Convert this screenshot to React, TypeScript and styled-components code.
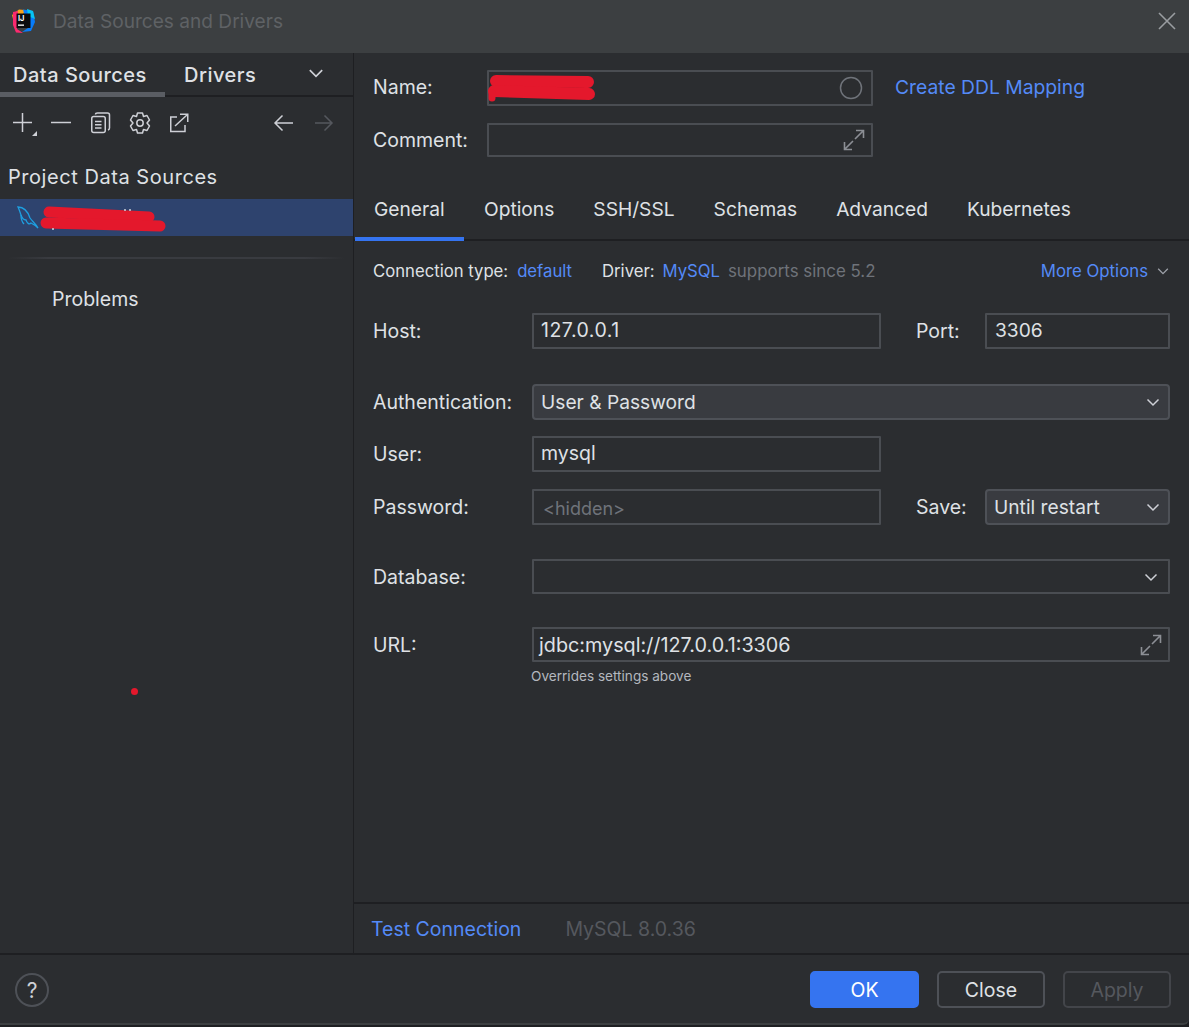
import * as React from 'react';
import styled, { createGlobalStyle } from 'styled-components';

// =========================
// Tokens
// =========================

const text = '#dfe1e5';
const link = '#548af7';
const muted = '#6f737a';
const border = '#4a4d52';
const bg = '#2b2d30';
const line = '#1e1f22';

const GlobalStyle = createGlobalStyle`
  html, body {
    margin: 0;
    padding: 0;
    background: ${line};
  }
  body {
    font-family: Inter, "Noto Sans", sans-serif;
    color: ${text};
    overflow: hidden;
  }
`;

// =========================
// Window shell
// =========================

const Window = styled.div`
  position: relative;
  width: 1189px;
  height: 1027px;
  display: flex;
  flex-direction: column;
  background: ${line};
  overflow: hidden;
`;

const TitleBar = styled.div`
  height: 53px;
  flex: none;
  display: flex;
  align-items: center;
  padding: 0 10px 11px 10px;
  box-sizing: border-box;
  background: #3c3f41;
`;

const Title = styled.div`
  margin-left: 17px;
  font-size: 19.100px;
  color: #5f6265;
  flex: 1;
`;

const Main = styled.div`
  height: 900px;
  flex: none;
  display: flex;
  background: ${bg};
`;

// =========================
// Left panel
// =========================

const Side = styled.aside`
  width: 353px;
  flex: none;
  border-right: 1px solid ${line};
  display: flex;
  flex-direction: column;
`;

const SideTabs = styled.div`
  height: 44px;
  flex: none;
  display: flex;
  align-items: stretch;
  border-bottom: 2px solid ${line};
  box-sizing: border-box;
`;

const SideTab = styled.div<{ $active?: boolean }>`
  width: ${({ $active }) => ($active ? '165px' : '134px')};
  box-sizing: border-box;
  margin-bottom: ${({ $active }) => ($active ? '-2px' : '0')};
  padding: 10px 0 0 ${({ $active }) => ($active ? '13px' : '19px')};
  font-size: 20px;
  font-weight: 500;
  letter-spacing: 0.5px;
  border-bottom: ${({ $active }) => ($active ? '5px solid #5a5d63' : 'none')};
`;

const TabsChevron = styled.div`
  display: flex;
  align-items: center;
  padding: 0 0 2px 8px;
`;

const Toolbar = styled.div`
  height: 52px;
  flex: none;
  display: flex;
  align-items: center;
  padding: 0 16px 0 12px;
  box-sizing: border-box;
`;

const ToolIcon = styled.svg<{ $gap?: number; $disabled?: boolean }>`
  width: 24px;
  height: 24px;
  flex: none;
  overflow: visible;
  margin-left: ${({ $gap }) => $gap ?? 0}px;
  fill: none;
  stroke: ${({ $disabled }) => ($disabled ? '#55585e' : '#ced0d6')};
  stroke-width: 1.5;
`;

const ToolSpacer = styled.div`
  flex: 1;
`;

const GroupTitle = styled.div`
  height: 50px;
  flex: none;
  padding: 6px 0 0 8px;
  display: flex;
  align-items: center;
  font-size: 20px;
  letter-spacing: 0.55px;
  box-sizing: border-box;
`;

const Selected = styled.div`
  position: relative;
  height: 37px;
  flex: none;
  background: #2e436e;
  padding-left: 16px;
  display: flex;
  align-items: center;
`;

const Scribble = styled.svg`
  position: absolute;
  left: 0;
  top: 0;
  overflow: visible;
  fill: none;
  stroke: #e4182c;
  stroke-linecap: round;
  pointer-events: none;
`;

const Separator = styled.div`
  height: 2px;
  flex: none;
  margin: 21px 8px 0;
  background: linear-gradient(90deg, #2b2d30, #393b40 12%, #393b40 88%, #2b2d30);
`;

const ProblemsRow = styled.div`
  padding: 28px 0 0 52px;
  font-size: 19.500px;
  line-height: 24px;
`;

const RedDot = styled.div`
  position: absolute;
  left: 131px;
  top: 688px;
  width: 7px;
  height: 7px;
  border-radius: 50%;
  background: #e4182c;
`;

// =========================
// Right panel
// =========================

const Content = styled.section`
  flex: 1;
  min-width: 0;
  display: flex;
  flex-direction: column;
`;

const Header = styled.div`
  padding: 17px 19px 0;
  height: 131px;
  box-sizing: border-box;
  flex: none;
`;

const Row = styled.div<{ $top?: number }>`
  display: flex;
  align-items: center;
  margin-top: ${({ $top }) => $top ?? 0}px;
`;

const Label = styled.div<{ $width: number }>`
  width: ${({ $width }) => $width}px;
  flex: none;
  font-size: 19.500px;
`;

const Field = styled.div<{ $width?: number; $height?: number; $filled?: boolean; $pad?: number; $end?: number; $round?: boolean }>`
  position: relative;
  ${({ $width }) => ($width ? `width: ${$width}px; flex: none;` : 'flex: 1; min-width: 0;')}
  height: ${({ $height }) => $height ?? 36}px;
  box-sizing: border-box;
  border: 2px solid ${({ $filled }) => ($filled ? '#4e5157' : border)};
  border-radius: ${({ $round }) => ($round ? '4px' : '1px')};
  background: ${({ $filled }) => ($filled ? '#393b40' : 'transparent')};
  display: flex;
  align-items: center;
  justify-content: space-between;
  padding: 0 ${({ $end }) => $end ?? 8}px 0 ${({ $pad }) => $pad ?? 7}px;
  font-size: 19.200px;
`;

const FieldValue = styled.span<{ $hint?: boolean; $tracking?: number; $size?: number }>`
  color: ${({ $hint }) => ($hint ? muted : text)};
  font-size: ${({ $hint, $size }) => ($hint ? '18px' : `${$size ?? 19.5}px`)};
  letter-spacing: ${({ $tracking }) => $tracking ?? 0}px;
  position: relative;
  top: ${({ $hint }) => ($hint ? '1px' : '-1px')};
  left: ${({ $hint }) => ($hint ? '2px' : '0')};
`;

const LinkText = styled.span<{ $size?: number; $left?: number }>`
  color: ${link};
  font-size: ${({ $size }) => $size ?? 19.3}px;
  margin-left: ${({ $left }) => $left ?? 0}px;
  white-space: nowrap;
`;

const Tabs = styled.div`
  height: 57px;
  flex: none;
  box-sizing: border-box;
  display: flex;
  border-bottom: 2px solid ${line};
`;

const Tab = styled.div<{ $active?: boolean }>`
  box-sizing: border-box;
  height: 57px;
  width: ${({ $active }) => ($active ? '109px' : 'auto')};
  padding: 0 20px ${({ $active }) => ($active ? '4px' : '8px')} ${({ $active }) => ($active ? '19px' : '20px')};
  display: flex;
  align-items: center;
  font-size: 19.200px;
  margin: 0 ${({ $active }) => ($active ? '0' : '-1px')} 0 ${({ $active }) => ($active ? '1px' : '0')};
  border-bottom: ${({ $active }) => ($active ? '4px solid #3574f0' : 'none')};
`;

const Form = styled.div`
  flex: 1;
  padding: 0 19px;
  min-height: 0;
`;

const InfoRow = styled.div`
  height: 29px;
  margin-top: 15px;
  display: flex;
  align-items: center;
  font-size: 16.700px;
  white-space: nowrap;
`;

const InfoGap = styled.span<{ $width: number }>`
  display: inline-block;
  width: ${({ $width }) => $width}px;
`;

const Muted = styled.span`
  font-size: 16.900px;
  color: ${muted};
`;

const MoreOptions = styled.div`
  margin-left: auto;
  display: flex;
  align-items: center;
  gap: 8px;
  font-size: 16.800px;
  color: ${link};
`;

const SideLabel = styled.div`
  width: 69px;
  margin-left: 35px;
  flex: none;
  font-size: 19.500px;
`;

const Hint = styled.div`
  margin: 6px 0 0 158px;
  font-size: 13.600px;
  color: #b4b8bf;
`;

const StatusBar = styled.div`
  height: 51px;
  flex: none;
  box-sizing: border-box;
  border-top: 2px solid ${line};
  display: flex;
  align-items: center;
  padding: 0 0 0 17px;
  gap: 44px;
`;

const Version = styled.span`
  font-size: 19.500px;
  color: #55585e;
`;

// =========================
// Footer
// =========================

const Footer = styled.footer`
  height: 72px;
  flex: none;
  box-sizing: border-box;
  background: ${bg};
  border-top: 2px solid ${line};
  border-bottom: 2px solid #3c3f41;
  border-bottom-right-radius: 6px;
  padding: 16px 18px 0 15px;
  display: flex;
  align-items: flex-start;
`;

const Help = styled.div`
  width: 34px;
  height: 34px;
  box-sizing: border-box;
  border: 2px solid #4e5157;
  border-radius: 50%;
  margin-top: 2px;
  display: flex;
  align-items: center;
  justify-content: center;
  font-size: 21px;
  color: #ced0d6;
`;

const Buttons = styled.div`
  margin-left: auto;
  display: flex;
  gap: 18px;
`;

const Button = styled.div<{ $kind?: 'primary' | 'disabled' }>`
  width: ${({ $kind }) => ($kind === 'primary' ? '109px' : '108px')};
  height: 37px;
  box-sizing: border-box;
  border-radius: 5px;
  display: flex;
  align-items: center;
  justify-content: center;
  font-size: 19.500px;
  border: 2px solid ${({ $kind }) => ($kind === 'primary' ? '#3574f0' : $kind === 'disabled' ? '#43454a' : '#4e5157')};
  background: ${({ $kind }) => ($kind === 'primary' ? '#3574f0' : 'transparent')};
  color: ${({ $kind }) => ($kind === 'primary' ? '#ffffff' : $kind === 'disabled' ? '#55585e' : text)};
`;

// =========================
// Icons
// =========================

const AppLogo = () => (
  <svg width="26" height="26" viewBox="0 0 26 26" style={{ flex: 'none' }}>
    <path d="M2 7 L9 1.500 L15 2 L10 14 L4 15 Z" fill="#f9a11b" />
    <path d="M3 4 L8 3 L7 21 L13 25 L6 24.500 L3 17 Z" fill="#fc2a6f" />
    <path d="M13 1.500 L23 3 L25 14 L21 23 L12 24 L18 20 Z" fill="#087cfa" />
    <path d="M17 1 L23 3 L25 11 L18 8 Z" fill="#07c3f2" />
    <rect x="6.500" y="5.500" width="14" height="14.500" fill="#0b0b0d" />
    <text x="8" y="12.500" fontFamily="Inter, sans-serif" fontWeight="700" fontSize="7.500" fill="#ffffff">IJ</text>
    <rect x="8" y="16.500" width="6" height="1.300" fill="#ffffff" />
  </svg>
);

const Chevron = ({ size = 16, color = '#ced0d6' }: { size?: number; color?: string }) => (
  <svg width={size} height={size} viewBox="0 0 16 16" fill="none" stroke={color} strokeWidth="1.5">
    <path d="M2.500 5.500 L8 11 L13.500 5.500" />
  </svg>
);

const Expand = () => (
  <svg width="24" height="24" viewBox="0 0 24 24" fill="none" stroke="#8c8f95" strokeWidth="1.600" style={{ flex: 'none', marginRight: -3 }}>
    <path d="M14 2.500h7.500V10M21.500 2.500 L13 11M11 13 L2.500 21.500M2.500 14v7.500H10" />
  </svg>
);

// =========================
// Component
// =========================

export default function App() {
  return (
    <Window>
      <GlobalStyle />
      <TitleBar>
        <AppLogo />
        <Title>Data Sources and Drivers</Title>
        <svg width="18" height="18" viewBox="0 0 18 18" stroke="#9a9da1" strokeWidth="1.600" style={{ marginRight: 3 }}>
          <path d="M1 1 L17 17 M17 1 L1 17" />
        </svg>
      </TitleBar>
      <Main>
        <Side>
          <SideTabs>
            <SideTab $active>Data Sources</SideTab>
            <SideTab>Drivers</SideTab>
            <TabsChevron>
              <Chevron size={18} />
            </TabsChevron>
          </SideTabs>
          <Toolbar>
            <ToolIcon viewBox="0 0 24 24">
              <path d="M10.500 2v19M1 11.500h19" />
              <path d="M25 20v5h-5z" fill="#ced0d6" stroke="none" />
            </ToolIcon>
            <ToolIcon viewBox="0 0 24 24" $gap={12}>
              <path d="M3 11.500h20" />
            </ToolIcon>
            <ToolIcon viewBox="0 0 24 24" $gap={15}>
              <rect x="4.750" y="5.500" width="13.500" height="16" rx="2" />
              <path d="M8.500 3.500 C8.500 2.500 9.500 2 10.500 2h10c1.200 0 2 .8 2 2v13c0 1-.6 1.700-1.500 2" />
              <path d="M8 10.500h6.500M8 13.750h6.500M8 17h6.500" />
            </ToolIcon>
            <ToolIcon viewBox="0 0 24 24" $gap={17}>
              <path d="M9.500 2h5l1 3.500 3.500-1 2.500 4.500-2.500 3 2.500 3-2.500 4.500-3.500-1-1 3.500h-5l-1-3.500-3.500 1-2.500-4.500 2.500-3-2.500-3 2.500-4.500 3.500 1z" strokeLinejoin="round" />
              <circle cx="12" cy="12" r="3.200" />
            </ToolIcon>
            <ToolIcon viewBox="0 0 24 24" $gap={15}>
              <path d="M10 6H3.750v14.500H18V14" />
              <path d="M8 15 L20.500 3.500M13 3.250h7.750V11" />
            </ToolIcon>
            <ToolSpacer />
            <ToolIcon viewBox="0 0 24 24">
              <path d="M21 12H3M10.500 4.500 L3 12l7.500 7.500" />
            </ToolIcon>
            <ToolIcon viewBox="0 0 24 24" $gap={17} $disabled>
              <path d="M2 12h17M11.500 4.500 L19 12l-7.500 7.500" />
            </ToolIcon>
          </Toolbar>
          <GroupTitle>Project Data Sources</GroupTitle>
          <Selected>
            <svg width="24" height="26" viewBox="0 0 24 26" fill="none" stroke="#1e9fe0" strokeWidth="1.300">
              <path d="M2 2 C8 2 12 7 14 13 C16 16 20 19 22 23 C19 20 17 19 15 18 C13 20 11 18 10 15 C8 15 6 13 5 10 C4 7 3 4 2 2 Z" />
              <path d="M5 10 C5 14 6 17 8 19" />
            </svg>
            <Scribble width="353" height="37">
              <line x1="49" y1="13" x2="149" y2="18" strokeWidth="11" />
              <line x1="46" y1="24" x2="160" y2="27" strokeWidth="11" />
              <circle cx="53" cy="30" r="1" fill="#cfd3dc" stroke="none" />
              <circle cx="125" cy="11" r="1" fill="#cfd3dc" stroke="none" />
              <circle cx="130" cy="11" r="1" fill="#cfd3dc" stroke="none" />
            </Scribble>
          </Selected>
          <Separator />
          <ProblemsRow>Problems</ProblemsRow>
        </Side>
        <Content>
          <Header>
            <Row>
              <Label $width={114} style={{ marginTop: -2 }}>Name:</Label>
              <Field $width={386} $height={36}>
                <span />
                <svg width="24" height="24" viewBox="0 0 24 24" fill="none" stroke="#6f737a" strokeWidth="1.500">
                  <circle cx="12" cy="12" r="10.500" />
                </svg>
                <Scribble width="386" height="36">
                  <line x1="7" y1="9" x2="99" y2="10" strokeWidth="12" />
                  <line x1="5" y1="19" x2="100" y2="22" strokeWidth="12" />
                  <line x1="3" y1="21" x2="3" y2="26" strokeWidth="7" />
                </Scribble>
              </Field>
              <LinkText $left={22} style={{ marginTop: -2 }}>Create DDL Mapping</LinkText>
            </Row>
            <Row $top={17}>
              <Label $width={114}>Comment:</Label>
              <Field $width={386} $height={34}>
                <span />
                <Expand />
              </Field>
            </Row>
          </Header>
          <Tabs>
            <Tab $active>General</Tab>
            <Tab>Options</Tab>
            <Tab>SSH/SSL</Tab>
            <Tab>Schemas</Tab>
            <Tab>Advanced</Tab>
            <Tab>Kubernetes</Tab>
          </Tabs>
          <Form>
            <InfoRow>
              Connection type:<InfoGap $width={9} />
              <LinkText $size={16.7}>default</LinkText>
              <InfoGap $width={30} />
              Driver:<InfoGap $width={8} />
              <LinkText $size={16.7}>MySQL</LinkText>
              <InfoGap $width={8} />
              <Muted>supports since 5.2</Muted>
              <MoreOptions>
                More Options
                <Chevron size={14} color="#9da0a8" />
              </MoreOptions>
            </InfoRow>
            <Row $top={28}>
              <Label $width={159}>Host:</Label>
              <Field $width={349}>
                <FieldValue $tracking={0.5}>127.0.0.1</FieldValue>
              </Field>
              <SideLabel>Port:</SideLabel>
              <Field $pad={8}>
                <FieldValue $size={19.2}>3306</FieldValue>
              </Field>
            </Row>
            <Row $top={35}>
              <Label $width={159}>Authentication:</Label>
              <Field $filled $round $end={7}>
                User &amp; Password
                <Chevron />
              </Field>
            </Row>
            <Row $top={16}>
              <Label $width={159}>User:</Label>
              <Field $width={349}>
                <FieldValue>mysql</FieldValue>
              </Field>
            </Row>
            <Row $top={17}>
              <Label $width={159}>Password:</Label>
              <Field $width={349}>
                <FieldValue $hint>&lt;hidden&gt;</FieldValue>
              </Field>
              <SideLabel>Save:</SideLabel>
              <Field $filled $round $end={7}>
                Until restart
                <Chevron />
              </Field>
            </Row>
            <Row $top={34}>
              <Label $width={159}>Database:</Label>
              <Field $height={35} $end={9}>
                <span />
                <Chevron />
              </Field>
            </Row>
            <Row $top={33}>
              <Label $width={159}>URL:</Label>
              <Field $height={35} $pad={5}>
                <FieldValue $size={19.8} style={{ top: 0 }}>jdbc:mysql://127.0.0.1:3306</FieldValue>
                <Expand />
              </Field>
            </Row>
            <Hint>Overrides settings above</Hint>
          </Form>
          <StatusBar>
            <LinkText $size={19.5}>Test Connection</LinkText>
            <Version>MySQL 8.0.36</Version>
          </StatusBar>
        </Content>
      </Main>
      <Footer>
        <Help>?</Help>
        <Buttons>
          <Button $kind="primary">OK</Button>
          <Button>Close</Button>
          <Button $kind="disabled">Apply</Button>
        </Buttons>
      </Footer>
      <RedDot />
    </Window>
  );
}
